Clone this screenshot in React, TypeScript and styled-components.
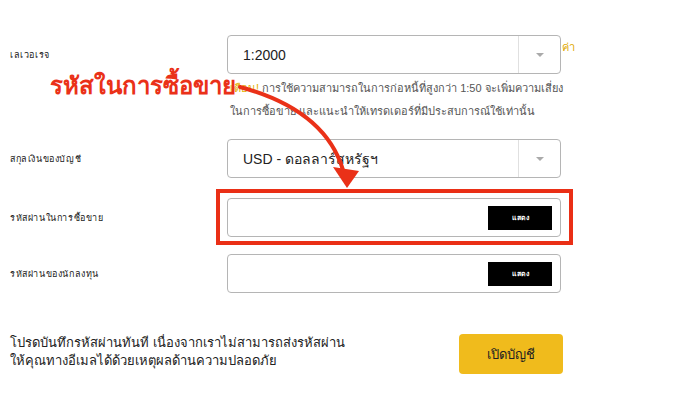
import React from "react";
import styled, { createGlobalStyle } from "styled-components";

const Global = createGlobalStyle`
  html, body { margin: 0; padding: 0; background: #ffffff; }
  body { font-family: "Liberation Sans", "Noto Sans", Tahoma, sans-serif; color: #222; }
`;

const Page = styled.div`
  position: relative;
  width: 695px;
  height: 419px;
  overflow: hidden;
  box-sizing: border-box;
  padding: 35px 0 0 10px;
`;

const Form = styled.div`
  display: grid;
  grid-template-columns: 217px 334px 40px;
  align-items: center;
`;

const Label = styled.div<{ $mt?: number }>`
  font-size: 9px;
  letter-spacing: 0.6px;
  color: #222;
  margin-top: ${(p) => p.$mt ?? 0}px;
`;

const Field = styled.div<{ $mt?: number }>`
  box-sizing: border-box;
  height: 39px;
  border: 1px solid #b5b5b5;
  border-radius: 4px;
  display: flex;
  align-items: center;
  margin-top: ${(p) => p.$mt ?? 0}px;
  background: #fff;
`;

const Value = styled.div`
  flex: 1;
  padding-left: 15px;
  font-size: 14px;
  color: #222;
`;

const Caret = styled.div`
  width: 41px;
  align-self: stretch;
  border-left: 1px solid #e0e0e0;
  display: flex;
  align-items: center;
  justify-content: center;
  &::after {
    content: "";
    border-left: 4px solid transparent;
    border-right: 4px solid transparent;
    border-top: 4px solid #aaa;
  }
`;

const ShowButton = styled.button`
  margin-left: auto;
  margin-right: 8px;
  width: 64px;
  height: 24px;
  border: none;
  background: #000;
  color: #fff;
  font-size: 7px;
  font-weight: bold;
  padding: 0;
  font-family: inherit;
`;

const Side = styled.div`
  align-self: start;
  padding-top: 3px;
  padding-left: 1px;
  font-size: 11px;
  color: #e0a800;
`;

const Warning = styled.div`
  grid-column: 2 / 4;
  margin-left: 3px;
  margin-top: 3px;
  font-size: 11px;
  line-height: 23px;
  color: #555;
  white-space: nowrap;
`;

const Em = styled.span`
  color: #e3b100;
`;

const Footer = styled.div`
  display: flex;
  align-items: flex-start;
  margin-top: 41px;
`;

const Note = styled.div`
  width: 449px;
  font-size: 13px;
  line-height: 18px;
  color: #222;
`;

const OpenButton = styled.button`
  width: 104px;
  height: 40px;
  border: none;
  border-radius: 4px;
  background: #f0bb1c;
  color: #222;
  font-size: 13px;
  font-family: inherit;
`;

const Annotation = styled.div`
  position: absolute;
  left: 50px;
  top: 66px;
  font-size: 24px;
  font-weight: bold;
  color: #ea3118;
  white-space: nowrap;
`;

const Highlight = styled.div`
  position: absolute;
  left: 216px;
  top: 189px;
  width: 357px;
  height: 56px;
  box-sizing: border-box;
  border: 4px solid #ea2f16;
`;

const Arrow = styled.svg`
  position: absolute;
  left: 0;
  top: 0;
  pointer-events: none;
`;

export default function App() {
  return (
    <>
      <Global />
      <Page>
        <Form>
          <Label>เลเวอเรจ</Label>
          <Field>
            <Value>1:2000</Value>
            <Caret />
          </Field>
          <Side>ค่า</Side>

          <Warning>
            <Em>เตือน!</Em> การใช้ความสามารถในการก่อหนี้ที่สูงกว่า 1:50 จะเพิ่มความเสี่ยง
            <br />
            ในการซื้อขาย และแนะนำให้เทรดเดอร์ที่มีประสบการณ์ใช้เท่านั้น
          </Warning>

          <Label $mt={16}>สกุลเงินของบัญชี</Label>
          <Field $mt={16}>
            <Value>USD - ดอลลาร์สหรัฐฯ</Value>
            <Caret />
          </Field>
          <div />

          <Label $mt={20}>รหัสผ่านในการซื้อขาย</Label>
          <Field $mt={20}>
            <ShowButton>แสดง</ShowButton>
          </Field>
          <div />

          <Label $mt={17}>รหัสผ่านของนักลงทุน</Label>
          <Field $mt={17}>
            <ShowButton>แสดง</ShowButton>
          </Field>
          <div />
        </Form>

        <Footer>
          <Note>
            โปรดบันทึกรหัสผ่านทันที เนื่องจากเราไม่สามารถส่งรหัสผ่าน
            <br />
            ให้คุณทางอีเมลได้ด้วยเหตุผลด้านความปลอดภัย
          </Note>
          <OpenButton>เปิดบัญชี</OpenButton>
        </Footer>

        <Highlight />
        <Annotation>รหัสในการซื้อขาย</Annotation>
        <Arrow width="695" height="419" viewBox="0 0 695 419">
          <path d="M240 87 Q325 110 343 170" fill="none" stroke="#ea3118" strokeWidth="4" strokeLinecap="round" />
          <polygon points="333,167 359,171 347,188" fill="#ea3118" />
        </Arrow>
      </Page>
    </>
  );
}
